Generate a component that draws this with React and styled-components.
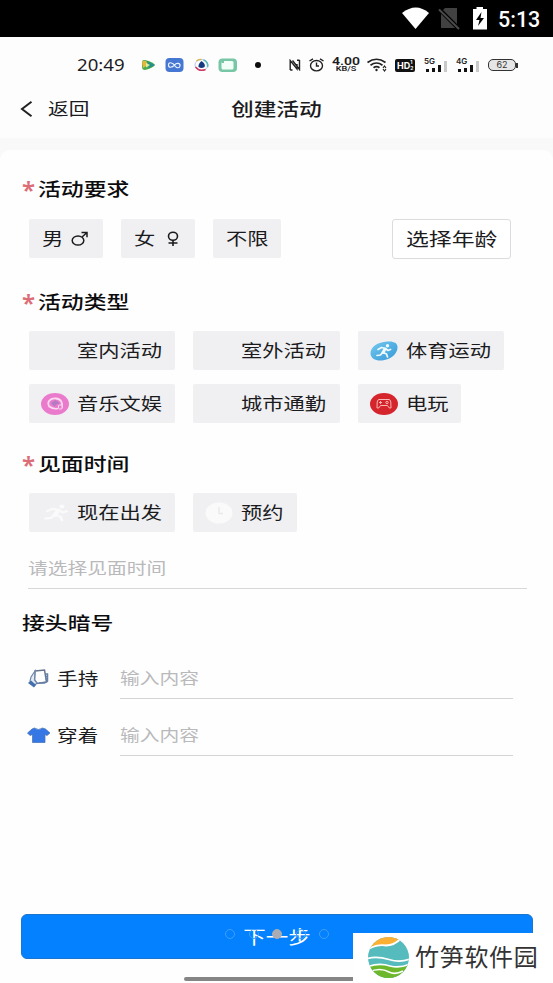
import React from 'react';
import styled, { createGlobalStyle } from 'styled-components';

const GlobalStyle = createGlobalStyle`
  * {
    box-sizing: border-box;
  }
  body {
    margin: 0;
    background: #fdfdfd;
    font-family: 'Noto Sans CJK SC', 'Noto Sans', sans-serif;
  }
  svg {
    display: block;
    flex: none;
  }
`;

const Page = styled.div`
  position: relative;
  display: flex;
  flex-direction: column;
  width: 553px;
  height: 983px;
  overflow: hidden;
  background: #fdfdfd;
`;

const SystemBar = styled.div`
  display: flex;
  align-items: center;
  justify-content: flex-end;
  height: 37px;
  padding-right: 12px;
  background: #000;
`;

const SystemTime = styled.span`
  width: 43px;
  margin-left: 10px;
  padding-top: 2px;
  color: #fff;
  font: 500 21.5px/37px Roboto, sans-serif;
  white-space: nowrap;
`;

const PhoneBar = styled.div`
  display: flex;
  align-items: center;
  height: 56px;
  padding-left: 77px;
`;

const Text = styled.span`
  display: block;
  flex: none;
  height: 24px;
  transform: scaleX(${props => props.$stretch || 1.25});
  transform-origin: ${props => props.$origin || 'left'} center;
  font-size: ${props => props.$size || 17}px;
  font-weight: ${props => props.$weight || 400};
  line-height: 22px;
  color: ${props => props.$color || '#1b1b1d'};
  white-space: nowrap;
`;

const PhoneTime = styled(Text)`
  width: 64px;
  font-family: 'Noto Sans', sans-serif;
  line-height: 25px;
`;

const PhoneIcon = styled.div`
  width: ${props => props.$width}px;
  margin-right: ${props => props.$gap || 0}px;
`;

const Speed = styled.div`
  display: flex;
  flex-direction: column;
  align-items: center;
  width: 27px;
  margin-right: 8px;
`;

const SpeedText = styled(Text)`
  height: ${props => props.$line}px;
  font-family: Roboto, sans-serif;
  line-height: ${props => props.$line}px;
`;

const HdBadge = styled.div`
  display: flex;
  align-items: center;
  width: 20px;
  height: 13px;
  margin-right: 9px;
  padding-left: 2px;
  border-radius: 2px;
  background: #111;
  color: #fff;
  font: 700 9px/13px Inter, sans-serif;
`;

const HdIndex = styled.span`
  display: flex;
  flex-direction: column;
  font-size: 5px;
  line-height: 6px;
`;

const Signal = styled.div`
  width: 23px;
  margin-right: 9px;
`;

const SignalLabel = styled.div`
  height: 6px;
  color: #222;
  font: 600 8px/5px Inter, sans-serif;
`;

const SignalBars = styled.div`
  display: flex;
  align-items: flex-end;
  justify-content: flex-end;
  gap: 3px;
  height: 7px;
`;

const SignalBar = styled.i`
  width: 3px;
  height: ${props => props.$height}px;
  background: ${props => (props.$off ? '#c9c9c9' : '#111')};
  flex: none;
`;

const Battery = styled.div`
  display: flex;
  align-items: center;
  width: 30px;
`;

const BatteryBody = styled.div`
  width: 28px;
  height: 12px;
  border: 1.5px solid #333;
  border-radius: 5px;
  background: #e6e6e6;
  color: #333;
  font: 400 9px/10px Inter, sans-serif;
  text-align: center;
`;

const BatteryTip = styled.i`
  width: 2px;
  height: 5px;
  background: #333;
`;

const NavBar = styled.div`
  display: grid;
  grid-template-columns: 210px 1fr 210px;
  align-items: center;
  height: 32px;
`;

const Back = styled.div`
  display: flex;
  align-items: center;
  gap: 15px;
  padding-left: 20px;
`;

const Title = styled.div`
  display: flex;
  justify-content: center;
`;

const Form = styled.div`
  display: flex;
  flex-direction: column;
  flex: 1;
  margin-top: 13px;
  border-top: 12px solid #f9f9fa;
  background: #f9f9fa;
`;

const Card = styled.div`
  flex: 1;
  padding: 27px 20px 0 22px;
  border-radius: 10px 10px 0 0;
  background: #fefefe;
`;

const Heading = styled.div`
  display: flex;
  align-items: center;
  height: 24px;
  margin-top: ${props => props.$top || 0}px;
`;

const Star = styled.span`
  width: 16px;
  height: 24px;
  color: #dc6c76;
  font: 600 24px/26px 'Noto Sans', sans-serif;
`;

const ChipRow = styled.div`
  display: flex;
  gap: 18px;
  margin-top: ${props => props.$top}px;
  padding-left: 7px;
`;

const Chip = styled.div`
  display: flex;
  align-items: center;
  flex: none;
  width: ${props => props.$width}px;
  height: 39px;
  padding-left: ${props => props.$pad || 12}px;
  border-radius: 2px;
  background: #f0f0f3;
`;

const ChipIcon = styled.div`
  width: 36px;
`;

const GenderName = styled.div`
  width: ${props => props.$width}px;
`;

const AgeButton = styled.div`
  width: 119px;
  height: 40px;
  margin-left: 93px;
  padding: 7px 0 0 13px;
  border: 1px solid #dcdcde;
  border-radius: 3px;
  background: #fff;
`;

const TimeField = styled.div`
  height: 40px;
  margin: 17px 6px 0;
  padding: 8px 0 0;
  border-bottom: 1px solid #d8d8d8;
`;

const CodeRow = styled.div`
  display: flex;
  height: 40px;
  margin-top: ${props => props.$top}px;
  padding-left: 5px;
`;

const CodeIcon = styled.div`
  width: 30px;
  padding-top: 10px;
`;

const CodeLabel = styled.div`
  width: 63px;
  padding-top: 8px;
`;

const CodeField = styled.div`
  width: 393px;
  padding-top: 8px;
  border-bottom: 1px solid #d4d4d4;
`;

const Footer = styled.div`
  display: flex;
  flex-direction: column;
  align-items: center;
  height: 69px;
  background: #fefefe;
`;

const NextButton = styled.div`
  display: flex;
  align-items: center;
  justify-content: center;
  width: 512px;
  height: 45px;
  margin-left: 1px;
  border: 1px solid #1c76cf;
  border-radius: 6px;
  background: #0381fe;
`;

const HomeBar = styled.div`
  width: 185px;
  height: 4px;
  margin-top: 18px;
  border-radius: 2px;
  background: #858585;
`;

const Dots = styled.div`
  position: absolute;
  left: 225px;
  top: 929px;
  display: flex;
  gap: 13.5px;
`;

const Dot = styled.i`
  width: 10px;
  height: 10px;
  border: 1px solid ${props => (props.$active ? '#a9acb2' : '#3f9ffb')};
  border-radius: 50%;
  background: ${props => (props.$active ? '#a9acb2' : 'transparent')};
`;

const Watermark = styled.div`
  position: absolute;
  right: 0;
  bottom: 0;
  display: flex;
  align-items: center;
  gap: 5px;
  width: 200px;
  height: 50px;
  padding-left: 14px;
  background: #fff;
`;

const WatermarkName = styled.span`
  color: #333;
  font-size: 24px;
  letter-spacing: 0.7px;
  line-height: 46px;
  height: 50px;
  white-space: nowrap;
`;

const SystemIcons = () => (
  <svg width="86" height="37" viewBox="0 0 86 37">
    <path d="M0 13 Q14 2 27 13 L13.5 29 Z" fill="#fff" />
    <path d="M43 8 H55 V28 H39 V12 Z" fill="#414141" />
    <path d="M36.500 8.500 L57 29" stroke="#000" strokeWidth="4" />
    <path d="M37 9.500 L57 29" stroke="#4a4a4a" strokeWidth="2" />
    <path d="M71 9 H74.500 V7 H81 V9 H85 V29.500 H71 Z" fill="#fff" />
    <path d="M79.500 12 L74 20 H77.500 L76 26 L82 18 H78.500 Z" fill="#000" />
  </svg>
);

const AppIcons = () => (
  <svg width="124" height="16" viewBox="0 0 124 16">
    <path d="M1 5 Q1 2.500 4 3 Q12 5 14 8 Q12 11 4 13 Q1 13 1 10 Z" fill="#49ac50" />
    <path d="M1 5 Q2 3 5 4 L7 8 L2 11 Z" fill="#e5b83d" />
    <path d="M6 4 L14 8 L8 11 Z" fill="#278f8a" />
    <path d="M5 6 L9 8 L5 10.500 Z" fill="#d9ef9a" />
    <rect x="24.500" y="1" width="18" height="14" rx="4" fill="#4677d2" />
    <path d="M34.500 9.500 C31 4.500 27.500 5 27.500 8 C27.500 11 31 11 33.500 8 C36 5 39.500 6.500 39 9 C38.500 11.500 35.500 11 34.500 9.500" fill="none" stroke="#e9f2ff" strokeWidth="1.200" />
    <ellipse cx="60.500" cy="8" rx="6.500" ry="5.500" fill="#fff" stroke="#b8c6ea" />
    <path d="M54.500 10 Q58.500 15 64.500 12.500" fill="none" stroke="#d03c68" strokeWidth="1.500" />
    <path d="M62.500 3 Q67.500 5 66.500 10" fill="none" stroke="#61b9bd" strokeWidth="1.500" />
    <path d="M55.500 4 Q57.500 2 60.500 2.500" fill="none" stroke="#d9b84e" strokeWidth="1.500" />
    <path d="M60.500 4 Q65 7 63.500 10 Q60.500 12 57.500 10 Q57 7 60.500 4Z" fill="#173b83" />
    <rect x="77.500" y="1.500" width="18.500" height="13.500" rx="4" fill="#77c6a5" />
    <rect x="80.500" y="4" width="12" height="8.500" rx="1.500" fill="#f1fff8" />
    <path d="M80.500 4 H83 V6 H80.500Z" fill="#77c6a5" />
    <circle cx="117" cy="8" r="3" fill="#0d0d0d" />
  </svg>
);

const NfcIcon = () => (
  <svg width="12" height="12" viewBox="0 0 12 12" fill="none" stroke="#222" strokeWidth="1.400">
    <path d="M1.200 11 V1.500 L8 10 V5 M3.500 1.500 L10.500 10.500 V1 M3.500 11 L1.200 11 M8 1.200 H10.500" />
  </svg>
);

const AlarmIcon = () => (
  <svg width="15" height="14" viewBox="0 0 15 14" fill="none" stroke="#222" strokeWidth="1.400">
    <ellipse cx="7.500" cy="7.700" rx="6" ry="5.200" />
    <path d="M7.500 4.500 V8 H10 M0.500 3 L4 0.800 M14.500 3 L11 0.800" />
  </svg>
);

const WifiIcon = () => (
  <svg width="21" height="14" viewBox="0 0 21 14" fill="none" stroke="#222" strokeWidth="1.700">
    <path d="M0.500 4.500 Q9.500 -2 18.500 4.500 M3.500 7.200 Q9.500 2.800 15.500 7.200 M6.500 9.700 Q9.500 7.500 12.500 9.700" />
    <circle cx="9.500" cy="12" r="1.200" fill="#222" stroke="none" />
    <path d="M16 10 L17.500 8 L19 10 M16 11 L17.500 13 L19 11" strokeWidth="1.200" />
  </svg>
);

const BackIcon = () => (
  <svg width="13" height="16" viewBox="0 0 13 16" fill="none" stroke="#222" strokeWidth="2">
    <path d="M11.500 0.800 L2 8 L11.500 15.200" />
  </svg>
);

const MaleIcon = () => (
  <svg width="18" height="15" viewBox="0 0 18 15" fill="none" stroke="#1b1b1d" strokeWidth="1.500">
    <ellipse cx="7" cy="9.500" rx="5.800" ry="4.600" />
    <path d="M11 6 L15.500 2 M10.500 1.600 H16 V6.200" />
  </svg>
);

const FemaleIcon = () => (
  <svg width="12" height="16" viewBox="0 0 12 16" fill="none" stroke="#1b1b1d" strokeWidth="1.600">
    <ellipse cx="6" cy="5.300" rx="4.500" ry="4" />
    <path d="M6 9.300 V15 M1.500 12 H10.500" />
  </svg>
);

const Runner = ({ color }) => (
  <g fill="none" stroke={color} strokeLinecap="round" strokeLinejoin="round">
    <circle cx="17.500" cy="4.700" r="1.700" fill={color} stroke="none" />
    <path d="M8 8.500 L11.500 6.500 L15.500 7.500 L18 9.500 L20.500 8.500" strokeWidth="1.700" />
    <path d="M15 8 L13 11.500" strokeWidth="3" />
    <path d="M13 11.500 L16.500 13 L17.500 16 M12.500 11.500 L10.500 14 L7 14.500" strokeWidth="1.700" />
  </g>
);

const SportIcon = () => (
  <svg width="28" height="20" viewBox="0 0 28 20">
    <defs>
      <linearGradient id="sport" x1="0" y1="0" x2="1" y2="1">
        <stop offset="0" stopColor="#74c9ee" />
        <stop offset="1" stopColor="#3697d8" />
      </linearGradient>
    </defs>
    <path d="M0.500 13 C0 6 8 1 17 0.500 C24 0 28 2 27.500 7 C27 14 19 19 12 19.500 C5 20 1 17 0.500 13Z" fill="url(#sport)" />
    <Runner color="#eefaff" />
  </svg>
);

const MusicIcon = () => (
  <svg width="28" height="22" viewBox="0 0 28 22">
    <ellipse cx="14" cy="11" rx="14" ry="11" fill="#ea7bcc" />
    <path d="M8.500 14 C5 8 10 5 15 5.500 C20 6 22 10 21 15" fill="none" stroke="#fbd9f1" strokeWidth="1.800" />
    <path d="M8.500 13.500 Q12 16.500 17 15.500" fill="none" stroke="#fbd9f1" strokeWidth="1.700" />
    <path d="M10 10 L14.500 7 L19 10.500 L16 11 L13.500 13.500Z" fill="#b17ac2" />
    <rect x="17.500" y="12" width="3.500" height="4" rx="1" fill="#ea7bcc" stroke="#fbd9f1" />
  </svg>
);

const GameIcon = () => (
  <svg width="28" height="22" viewBox="0 0 28 22">
    <ellipse cx="14" cy="11" rx="14" ry="11" fill="#d6242c" />
    <g fill="none" stroke="#f6b6b4" strokeWidth="1">
      <path d="M9 6.500 H19 Q20.500 6.500 20.800 9 L21 15 Q19 16 17.500 12.500 H10.500 Q9 16 7 15 L7.200 9 Q7.500 6.500 9 6.500Z" />
      <path d="M9 9.500 H12 M10.500 8 V11" />
      <circle cx="17" cy="9.500" r="1.200" />
    </g>
  </svg>
);

const RunIcon = () => (
  <svg width="31" height="22" viewBox="4 1 20 18" preserveAspectRatio="none">
    <Runner color="#fafafa" />
  </svg>
);

const ClockIcon = () => (
  <svg width="28" height="22" viewBox="0 0 28 22">
    <ellipse cx="14" cy="11" rx="13.500" ry="10.500" fill="#fafafa" />
    <path d="M14 5 V11.500 H18" fill="none" stroke="#e9e9ec" strokeWidth="1.300" />
  </svg>
);

const HoldIcon = () => (
  <svg width="23" height="20" viewBox="0 0 23 20">
    <path d="M8 2 L17.500 1 L19.500 13 L10 14.500 L7.500 11Z" fill="#fdfdfd" stroke="#66758d" strokeWidth="1.500" />
    <path d="M8 2 L4 8 L3 12 L8 16 L10 14 L7.500 11Z" fill="#e1eaf5" stroke="#7188ac" strokeWidth="1.200" />
    <path d="M1 14 L4 11.500 L9 16 L7 18.500Z" fill="#4370ae" />
    <path d="M18 5 H20.500 V12 L17.500 14 H12 M18.500 7.500 H21 M18.500 10 H21" fill="none" stroke="#6480aa" strokeWidth="1.500" />
  </svg>
);

const ShirtIcon = () => (
  <svg width="23" height="18" viewBox="0 0 23 18">
    <path d="M7.500 2 Q11.500 5 15.500 2 L18.500 3 L23 7 L20 9.500 L18 8.500 V16.500 H5.500 V8.500 L3 9.500 L0.500 7 L5 3Z" fill="#3578e5" stroke="#426fb3" strokeWidth="0.700" />
  </svg>
);

const LogoIcon = () => (
  <svg width="43" height="43" viewBox="0 0 43 43">
    <defs>
      <clipPath id="logo">
        <circle cx="21.500" cy="20.500" r="20.500" />
      </clipPath>
    </defs>
    <g clipPath="url(#logo)">
      <rect width="43" height="43" fill="#56bbbd" />
      <path d="M0 0 H34 Q28 7 20 8 Q12 7.500 4 11 L0 10Z" fill="#fbb034" />
      <path d="M2 11.500 Q12 7 19 8.500 Q27 8.500 34 1.500" fill="none" stroke="#fff" strokeWidth="2" />
      <path d="M0 30 Q12 26 23 29.500 Q33 32 43 27 V43 H0Z" fill="#6db72c" />
      <path d="M0 21.500 Q10 19 22 22.500 Q33 26 43 22 M0 30 Q12 25.500 23 29 Q33 31.500 43 27 M2 35 Q13 30 22 35 Q28 38 36 34" fill="none" stroke="#fff" strokeWidth="1.700" />
    </g>
  </svg>
);

const types = [
  [
    { name: '室内活动', width: 146 },
    { name: '室外活动', width: 147 },
    { name: '体育运动', width: 146, icon: <SportIcon /> },
  ],
  [
    { name: '音乐文娱', width: 146, icon: <MusicIcon /> },
    { name: '城市通勤', width: 147 },
    { name: '电玩', width: 103, icon: <GameIcon /> },
  ],
];

const codes = [
  { name: '手持', icon: <HoldIcon />, top: 24 },
  { name: '穿着', icon: <ShirtIcon />, top: 17 },
];

const SectionHeading = ({ title, top, required }) => (
  <Heading $top={top}>
    {required && <Star>*</Star>}
    <Text $size={18.3} $weight={500} $color="#0c0c0e">{title}</Text>
  </Heading>
);

const OptionChip = ({ name, width, icon }) => (
  <Chip $width={width}>
    <ChipIcon>{icon}</ChipIcon>
    <Text>{name}</Text>
  </Chip>
);

const MobileSignal = ({ label }) => (
  <Signal>
    <SignalLabel>{label}</SignalLabel>
    <SignalBars>
      <SignalBar $height={3} />
      <SignalBar $height={4} />
      <SignalBar $height={7} />
      <SignalBar $height={11} $off />
    </SignalBars>
  </Signal>
);

const App = () => {
  return (
    <Page>
      <GlobalStyle />
      <SystemBar>
        <SystemIcons />
        <SystemTime>5:13</SystemTime>
      </SystemBar>

      <PhoneBar>
        <PhoneTime $size={15.5} $stretch={1.2}>20:49</PhoneTime>
        <PhoneIcon $width={124} $gap={24}><AppIcons /></PhoneIcon>
        <PhoneIcon $width={12} $gap={8}><NfcIcon /></PhoneIcon>
        <PhoneIcon $width={15} $gap={8}><AlarmIcon /></PhoneIcon>
        <Speed>
          <SpeedText $size={10} $weight={600} $line={9} $stretch={1.4} $origin="center">4.00</SpeedText>
          <SpeedText $size={7} $weight={600} $line={7} $stretch={1.3} $origin="center">KB/S</SpeedText>
        </Speed>
        <PhoneIcon $width={21} $gap={7}><WifiIcon /></PhoneIcon>
        <HdBadge>
          HD
          <HdIndex>
            <span>1</span>
            <span>2</span>
          </HdIndex>
        </HdBadge>
        <MobileSignal label="5G" />
        <MobileSignal label="4G" />
        <Battery>
          <BatteryBody>62</BatteryBody>
          <BatteryTip />
        </Battery>
      </PhoneBar>

      <NavBar>
        <Back>
          <BackIcon />
          <Text $size={16.5}>返回</Text>
        </Back>
        <Title>
          <Text $size={18.2} $weight={500} $origin="center">创建活动</Text>
        </Title>
      </NavBar>

      <Form>
        <Card>
          <SectionHeading title="活动要求" required />
          <ChipRow $top={18}>
            <Chip $width={74} $pad={13}>
              <GenderName $width={29}><Text>男</Text></GenderName>
              <MaleIcon />
            </Chip>
            <Chip $width={74} $pad={13}>
              <GenderName $width={33}><Text>女</Text></GenderName>
              <FemaleIcon />
            </Chip>
            <Chip $width={68} $pad={13}>
              <Text>不限</Text>
            </Chip>
            <AgeButton>
              <Text $size={18.3}>选择年龄</Text>
            </AgeButton>
          </ChipRow>

          <SectionHeading title="活动类型" top={31} required />
          {types.map((row, index) => (
            <ChipRow key={index} $top={index === 0 ? 17 : 14}>
              {row.map(type => (
                <OptionChip key={type.name} {...type} />
              ))}
            </ChipRow>
          ))}

          <SectionHeading title="见面时间" top={29} required />
          <ChipRow $top={17}>
            <OptionChip name="现在出发" width={146} icon={<RunIcon />} />
            <OptionChip name="预约" width={104} icon={<ClockIcon />} />
          </ChipRow>
          <TimeField>
            <Text $size={15.8} $color="#b9b9bb">请选择见面时间</Text>
          </TimeField>

          <SectionHeading title="接头暗号" top={22} />
          {codes.map(code => (
            <CodeRow key={code.name} $top={code.top}>
              <CodeIcon>{code.icon}</CodeIcon>
              <CodeLabel>
                <Text $size={16.5}>{code.name}</Text>
              </CodeLabel>
              <CodeField>
                <Text $size={15.8} $color="#b9b9bb">输入内容</Text>
              </CodeField>
            </CodeRow>
          ))}
        </Card>
      </Form>

      <Footer>
        <NextButton>
          <Text $size={18} $color="#fff" $origin="center">下一步</Text>
        </NextButton>
        <HomeBar />
      </Footer>

      <Dots>
        <Dot />
        <Dot />
        <Dot $active />
        <Dot />
        <Dot />
      </Dots>

      <Watermark>
        <LogoIcon />
        <WatermarkName>竹笋软件园</WatermarkName>
      </Watermark>
    </Page>
  );
};

export default App;
